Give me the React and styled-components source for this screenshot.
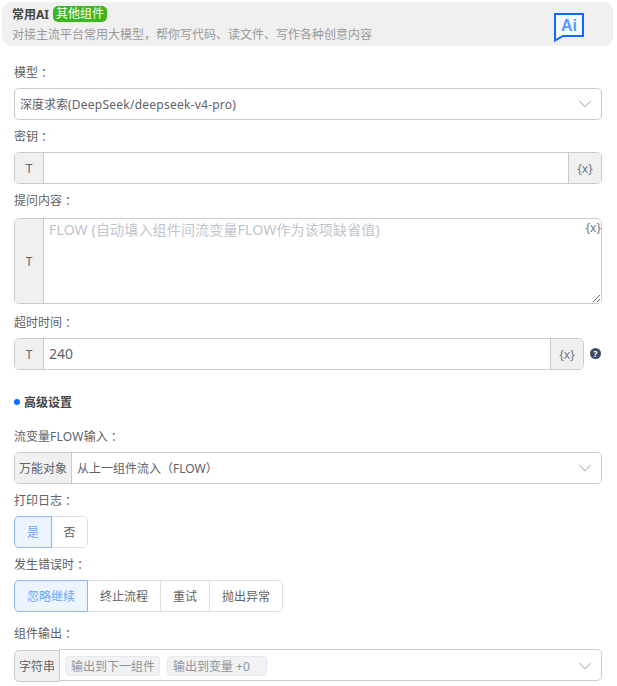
import React from 'react';
import styled, { createGlobalStyle } from 'styled-components';
import { ChevronDown } from 'lucide-react';

const GlobalStyle = createGlobalStyle`
    html, body {
        margin: 0;
        padding: 0;
        background: #fff;
    }
    body, input, textarea {
        font-family: "Noto Sans", "Noto Sans CJK SC", sans-serif;
    }
`;

const Page = styled.div`
    width: 617px;
    height: 686px;
    overflow: hidden;
    padding-top: 2px;
    box-sizing: border-box;
    color: #606266;
    font-size: 12px;
`;

const Banner = styled.header`
    margin: 0 4px 0 2px;
    height: 44px;
    border-radius: 9px;
    background: #f0f0f0;
    padding: 0 29px 0 10px;
    display: flex;
    align-items: center;
    justify-content: space-between;
`;

const BannerTitle = styled.div`
    display: flex;
    align-items: center;
    gap: 4px;
    height: 18px;
    font-size: 12px;
    font-weight: 700;
    color: #444;
`;

const Badge = styled.span`
    background: #3fb81f;
    color: #fff;
    border-radius: 5px;
    padding: 0 3px;
    height: 16px;
    line-height: 16px;
    font-weight: 400;
`;

const BannerText = styled.div`
    margin-top: 3px;
    line-height: 18px;
    color: #999;
`;

const Form = styled.div`
    padding: 10px 15px 0 14px;
`;

const Label = styled.div`
    height: 32px;
    display: flex;
    align-items: center;
    color: #606266;
    margin-top: ${(p) => p.$top || 0}px;
    margin-bottom: ${(p) => p.$gap || 0}px;
    &::after {
        content: '：';
        font-family: "Noto Sans CJK TC", sans-serif;
    }
`;

const Row = styled.div`
    display: flex;
    align-items: center;
    gap: 6px;
`;

const Control = styled.div`
    flex: 1;
    display: flex;
    height: ${(p) => p.$height || 32}px;
    box-sizing: border-box;
    border: 1px solid #ccc;
    border-radius: 5px;
    background: #fff;
    overflow: hidden;
`;

const Prefix = styled.div`
    flex: none;
    box-sizing: border-box;
    width: ${(p) => p.$width || 29}px;
    display: flex;
    align-items: center;
    justify-content: center;
    background: #f0f0f0;
    border-right: 1px solid #ccc;
    color: #606266;
`;

const TextInput = styled.input`
    flex: 1;
    min-width: 0;
    border: 0;
    outline: 0;
    padding: 0 5px 2px;
    font-size: 14px;
    color: #606266;
    background: transparent;
`;

const TextArea = styled.textarea`
    flex: 1;
    border: 0;
    outline: 0;
    padding: 1px 5px;
    font-size: 14px;
    line-height: 20px;
    color: #606266;
    resize: vertical;
    &::placeholder {
        color: #c0c4cc;
        letter-spacing: 0.16px;
    }
`;

const Suffix = styled.div`
    flex: none;
    box-sizing: border-box;
    width: 33px;
    display: flex;
    align-items: center;
    justify-content: center;
    background: #f0f0f0;
    border-left: 1px solid #ccc;
    color: #6b7785;
`;

const AreaWrap = styled.div`
    position: relative;
    flex: 1;
    display: flex;
`;

const AreaVar = styled.span`
    position: absolute;
    top: 0;
    right: 0;
    color: #6b7785;
`;

const SelectBody = styled.div`
    flex: 1;
    display: flex;
    align-items: center;
    padding: 0 5px;
    color: #606266;
    gap: 7px;
`;

const Latin = styled.span`
    letter-spacing: 0.24px;
`;

const Arrow = styled(ChevronDown)`
    flex: none;
    margin-left: auto;
    width: 22px;
    height: 22px;
    color: #c0c4cc;
    stroke-width: 1.2;
`;

const HelpIcon = styled.span`
    flex: none;
    width: 11px;
    height: 11px;
    margin: 0 1px 2px 0;
    border-radius: 50%;
    background: #3f4a63;
    color: #fff;
    font-size: 9px;
    font-weight: 700;
    line-height: 11px;
    text-align: center;
`;

const Section = styled.div`
    display: flex;
    align-items: center;
    gap: 4px;
    height: 18px;
    margin: 23px 0 9px;
    font-weight: 700;
    color: #444;
    &::before {
        content: '';
        width: 6px;
        height: 6px;
        border-radius: 50%;
        background: #0f6bff;
    }
`;

const Segments = styled.div`
    display: flex;
    height: 32px;
`;

const Segment = styled.div`
    box-sizing: border-box;
    width: ${(p) => p.$width}px;
    display: flex;
    align-items: center;
    justify-content: center;
    border: 1px solid ${(p) => (p.$active ? '#8ab8f8' : '#dcdfe6')};
    margin-left: -1px;
    background: ${(p) => (p.$active ? '#ecf4ff' : '#fff')};
    color: ${(p) => (p.$active ? '#6aa6ff' : '#606266')};
    position: relative;
    z-index: ${(p) => (p.$active ? 1 : 0)};
    &:first-child {
        margin-left: 0;
        border-radius: 5px 0 0 5px;
    }
    &:last-child {
        border-radius: 0 5px 5px 0;
    }
`;

const OutputRow = styled.div`
    display: flex;
    height: 33px;
`;

const OutputPrefix = styled.div`
    flex: none;
    box-sizing: border-box;
    width: 46px;
    height: 32px;
    margin-top: 1px;
    display: flex;
    align-items: center;
    justify-content: center;
    background: #f0f0f0;
    border: 1px solid #ccc;
    border-radius: 5px 0 0 5px;
`;

const OutputBody = styled.div`
    flex: 1;
    box-sizing: border-box;
    height: 32px;
    display: flex;
    align-items: center;
    gap: 7px;
    padding: 1px 5px 0;
    margin-left: -1px;
    border: 1px solid #ccc;
    border-radius: 0 5px 5px 0;
`;

const Tag = styled.span`
    flex: none;
    box-sizing: border-box;
    width: ${(p) => p.$width}px;
    height: 20px;
    padding: 0 5px;
    display: flex;
    align-items: center;
    white-space: nowrap;
    background: #f0f2f5;
    border: 1px solid #e9e9eb;
    border-radius: 4px;
    color: #909399;
`;

const AiSvg = styled.svg`
    flex: none;
    margin-top: 7px;
`;

const AiIcon = () => (
    <AiSvg width="30" height="30" viewBox="0 0 30 30">
        <path d="M1 1h28v22H9L1 27.5z" fill="#f6f9ff" stroke="#0f6bff" strokeWidth="2" />
        <text x="15" y="18" fontFamily="Liberation Sans" fontSize="16" fontWeight="700" fill="#5b9bff" textAnchor="middle">Ai</text>
    </AiSvg>
);

export default function App() {
    return (
        <Page>
            <GlobalStyle />
            <Banner>
                <div>
                    <BannerTitle>
                        常用AI <Badge>其他组件</Badge>
                    </BannerTitle>
                    <BannerText>对接主流平台常用大模型，帮你写代码、读文件、写作各种创意内容</BannerText>
                </div>
                <AiIcon />
            </Banner>
            <Form>
                <Label>模型</Label>
                <Control>
                    <SelectBody>
                        <span>深度求索<Latin>(DeepSeek/deepseek-v4-pro)</Latin></span>
                        <Arrow />
                    </SelectBody>
                </Control>

                <Label>密钥</Label>
                <Control>
                    <Prefix>T</Prefix>
                    <TextInput />
                    <Suffix>{'{x}'}</Suffix>
                </Control>

                <Label $gap={2}>提问内容</Label>
                <Control $height={86}>
                    <Prefix>T</Prefix>
                    <AreaWrap>
                        <TextArea placeholder="FLOW (自动填入组件间流变量FLOW作为该项缺省值)" />
                        <AreaVar>{'{x}'}</AreaVar>
                    </AreaWrap>
                </Control>

                <Label $top={2}>超时时间</Label>
                <Row>
                    <Control>
                        <Prefix>T</Prefix>
                        <TextInput defaultValue="240" />
                        <Suffix>{'{x}'}</Suffix>
                    </Control>
                    <HelpIcon>?</HelpIcon>
                </Row>

                <Section>高级设置</Section>

                <Label>流变量<Latin>FLOW</Latin>输入</Label>
                <Control>
                    <Prefix $width={57}>万能对象</Prefix>
                    <SelectBody>
                        从上一组件流入（FLOW）
                        <Arrow />
                    </SelectBody>
                </Control>

                <Label>打印日志</Label>
                <Segments>
                    <Segment $width={38} $active>是</Segment>
                    <Segment $width={37}>否</Segment>
                </Segments>

                <Label>发生错误时</Label>
                <Segments>
                    <Segment $width={74} $active>忽略继续</Segment>
                    <Segment $width={74}>终止流程</Segment>
                    <Segment $width={50}>重试</Segment>
                    <Segment $width={74}>抛出异常</Segment>
                </Segments>

                <Label $top={5}>组件输出</Label>
                <OutputRow>
                    <OutputPrefix>字符串</OutputPrefix>
                    <OutputBody>
                        <Tag $width={95}>输出到下一组件</Tag>
                        <Tag $width={100}>输出到变量 +0</Tag>
                        <Arrow />
                    </OutputBody>
                </OutputRow>
            </Form>
        </Page>
    );
}
